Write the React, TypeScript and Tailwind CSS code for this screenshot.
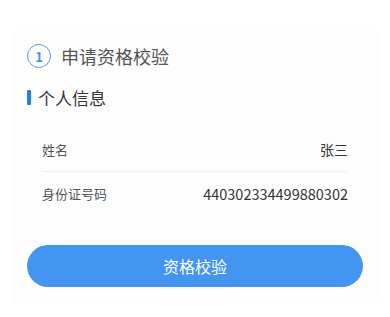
export default function App() {
  return (
    <div
      className="w-[390px] h-[317px] bg-white pt-[30px]"
      style={{ fontFamily: '"Noto Sans CJK SC", "Noto Sans", sans-serif' }}
    >
      <div className="mx-[12px] h-[272px] bg-[#fdfdfe] px-[15px]">
        <div className="flex items-center h-[52px]">
          <div className="w-[24px] h-[24px] rounded-full border-[1.5px] border-[#5a9be6] flex items-center justify-center text-[13px] font-bold text-[#4a8ee0] leading-none">
            1
          </div>
          <span className="ml-[10px] text-[18px] text-[#555] leading-none">申请资格校验</span>
        </div>
        <div className="flex items-center h-[28px] mt-[1px]">
          <div className="w-[4px] h-[15px] bg-[#1a86e8] rounded-[1px]" />
          <span className="ml-[7px] text-[17px] text-[#333] leading-none">个人信息</span>
        </div>
        <div className="mt-[17px] px-[15px]">
          <div className="flex items-center justify-between h-[44px] border-b border-[#efefef]">
            <span className="text-[13px] text-[#555]">姓名</span>
            <span className="text-[14px] text-[#333]">张三</span>
          </div>
          <div className="flex items-center justify-between h-[44px]">
            <span className="text-[13px] text-[#555]">身份证号码</span>
            <span className="text-[14.5px] text-[#333]">440302334499880302</span>
          </div>
        </div>
        <button className="mt-[29px] w-full h-[42px] rounded-full bg-[#4495f0] text-white text-[16px] leading-none">
          资格校验
        </button>
      </div>
    </div>
  );
}
